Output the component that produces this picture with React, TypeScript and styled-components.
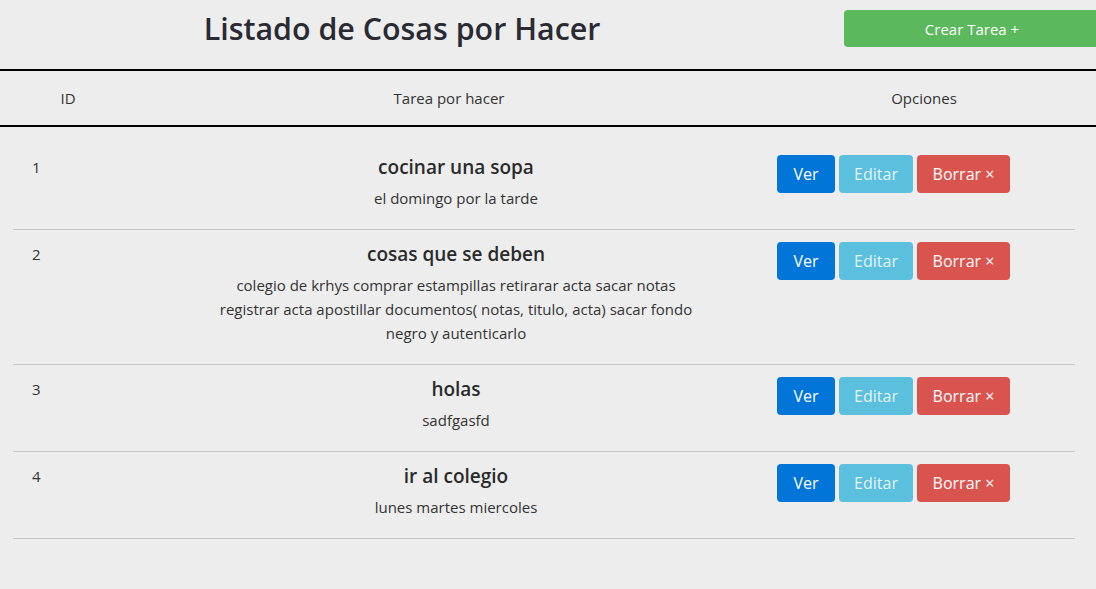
import React from "react";
import styled, { createGlobalStyle } from "styled-components";

const Global = createGlobalStyle`
  html, body { margin: 0; padding: 0; background: #ededed; overflow: hidden; }
  body { font-family: "Open Sans", "Noto Sans", sans-serif; color: #333; }
`;

const Page = styled.div`
  width: 1096px;
  height: 589px;
  background: #ededed;
`;

const TopBar = styled.header`
  display: grid;
  grid-template-columns: 804px 292px;
  height: 69px;
  align-items: start;
`;

const Title = styled.h1`
  margin: 0;
  padding-top: 7px;
  font-size: 30.4px;
  font-weight: 600;
  line-height: 44px;
  color: #2a2a33;
  text-align: center;
`;

const CreateButton = styled.button`
  margin: 10px 0 0 40px;
  width: 256px;
  height: 37px;
  border: none;
  border-radius: 4px;
  background: #5cb85c;
  color: #fff;
  font-family: inherit;
  font-size: 15px;
`;

const HeadRow = styled.div`
  display: grid;
  grid-template-columns: 136px 626px 1fr;
  height: 54px;
  align-items: center;
  border-top: 2px solid #000;
  border-bottom: 2px solid #000;
  font-size: 15px;
  color: #333;
`;

const HeadCell = styled.div<{ $padRight?: number }>`
  text-align: center;
  padding-right: ${(p) => p.$padRight ?? 0}px;
`;

const Body = styled.div`
  margin: 0 21px 0 13px;
  padding-top: 16px;
`;

const Row = styled.div`
  display: grid;
  grid-template-columns: 193px 500px 1fr;
  border-bottom: 1px solid #c6c6c6;
  padding: 11px 0 19px;
`;

const IdCell = styled.div`
  padding-left: 19px;
  font-size: 15px;
  line-height: 26px;
  color: #333;
`;

const TaskCell = styled.div`
  text-align: center;
`;

const TaskTitle = styled.div`
  font-size: 19px;
  font-weight: 600;
  line-height: 26px;
  margin-bottom: 6px;
  color: #2a2a2a;
`;

const TaskDesc = styled.div`
  font-size: 15px;
  line-height: 24px;
  color: #333;
`;

const Options = styled.div`
  display: flex;
  gap: 4px;
  padding-left: 71px;
  padding-top: 1px;
  align-items: flex-start;
`;

const ActionButton = styled.button<{ $bg: string; $w: number; $fade?: boolean }>`
  width: ${(p) => p.$w}px;
  height: 38px;
  border: none;
  border-radius: 4px;
  background: ${(p) => p.$bg};
  color: ${(p) => (p.$fade ? "rgba(255,255,255,0.85)" : "#fff")};
  font-family: inherit;
  font-size: 16px;
  padding: 0;
`;

const tasks = [
  { id: 1, title: "cocinar una sopa", desc: "el domingo por la tarde" },
  {
    id: 2,
    title: "cosas que se deben",
    desc:
      "colegio de krhys comprar estampillas retirarar acta sacar notas registrar acta apostillar documentos( notas, titulo, acta) sacar fondo negro y autenticarlo",
  },
  { id: 3, title: "holas", desc: "sadfgasfd" },
  { id: 4, title: "ir al colegio", desc: "lunes martes miercoles" },
];

export default function App() {
  return (
    <Page>
      <Global />
      <TopBar>
        <Title>Listado de Cosas por Hacer</Title>
        <div>
          <CreateButton>Crear Tarea +</CreateButton>
        </div>
      </TopBar>
      <HeadRow>
        <HeadCell>ID</HeadCell>
        <HeadCell>Tarea por hacer</HeadCell>
        <HeadCell $padRight={10}>Opciones</HeadCell>
      </HeadRow>
      <Body>
        {tasks.map((t) => (
          <Row key={t.id}>
            <IdCell>{t.id}</IdCell>
            <TaskCell>
              <TaskTitle>{t.title}</TaskTitle>
              <TaskDesc>{t.desc}</TaskDesc>
            </TaskCell>
            <Options>
              <ActionButton $bg="#0275d8" $w={58}>Ver</ActionButton>
              <ActionButton $bg="#5bc0de" $w={74} $fade>Editar</ActionButton>
              <ActionButton $bg="#d9534f" $w={93}>Borrar ×</ActionButton>
            </Options>
          </Row>
        ))}
      </Body>
    </Page>
  );
}
